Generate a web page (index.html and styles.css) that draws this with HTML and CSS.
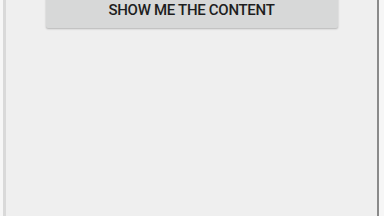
FILE: index.html
```html
<!DOCTYPE html>
<html lang="en">
<head>
    <meta charset="UTF-8">
    <meta name="viewport" content="width=device-width, initial-scale=1.0">
    <title>Content</title>
    <link rel="stylesheet" href="styles.css">
</head>
<body>
    <div class="screen">
        <div class="panel">
            <button class="show-btn">Show me the content</button>
        </div>
    </div>
</body>
</html>
```

FILE: styles.css
```css
/* General */
html, body {
    margin: 0;
    padding: 0;
    height: 100%;
    background: #f6f6f6;
    overflow: hidden;
}

.screen {
    height: 100%;
    padding: 0 5px 0 3px;
    box-sizing: border-box;
}

/* Panel with side borders */
.panel {
    height: 100%;
    background: #efefef;
    border-left: 3px solid #d9d9d9;
    border-right: 2px solid #8a8a8a;
    box-sizing: border-box;
    display: flex;
    flex-direction: column;
    align-items: center;
}

/* Button */
.show-btn {
    margin-top: -9px;
    width: 292px;
    height: 37px;
    background: #d7d8d8;
    border: none;
    border-radius: 2px;
    box-shadow: 0px 1px 2px rgba(0, 0, 0, 0.25);
    font-family: 'Roboto', sans-serif;
    font-size: 15px;
    font-weight: 500;
    letter-spacing: -0.3px;
    color: #1e1e1e;
    text-transform: uppercase;
    padding: 0;
}
```
